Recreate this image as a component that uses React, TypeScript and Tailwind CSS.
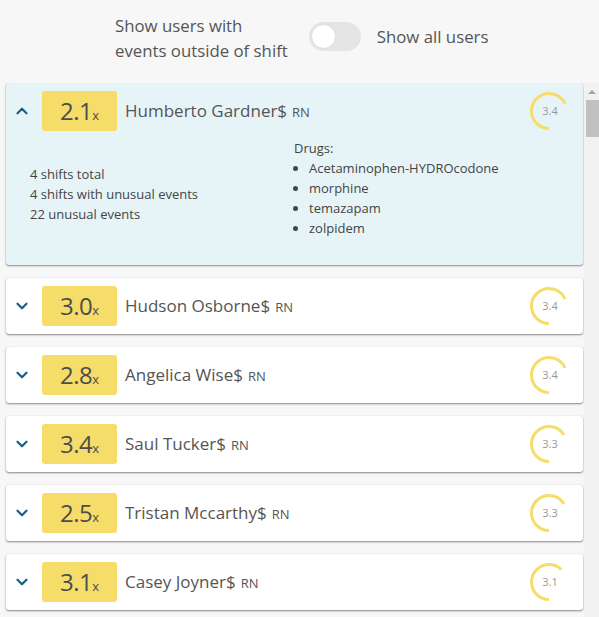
import { ChevronDown, ChevronUp } from "lucide-react";

type User = {
  id: number;
  score: string;
  name: string;
  rating: number;
  expanded?: boolean;
};

const USERS: User[] = [
  { id: 1, score: "2.1", name: "Humberto Gardner$", rating: 3.4, expanded: true },
  { id: 2, score: "3.0", name: "Hudson Osborne$", rating: 3.4 },
  { id: 3, score: "2.8", name: "Angelica Wise$", rating: 3.4 },
  { id: 4, score: "3.4", name: "Saul Tucker$", rating: 3.3 },
  { id: 5, score: "2.5", name: "Tristan Mccarthy$", rating: 3.3 },
  { id: 6, score: "3.1", name: "Casey Joyner$", rating: 3.1 },
];

const DRUGS = ["Acetaminophen-HYDROcodone", "morphine", "temazapam", "zolpidem"];

function RatingRing({ value }: { value: number }) {
  const r = 17.5;
  const c = 2 * Math.PI * r;
  const arc = (value / 5) * c;
  return (
    <div className="relative w-[40px] h-[40px] shrink-0">
      <svg width="40" height="40" viewBox="0 0 40 40">
        <circle
          cx="20"
          cy="20"
          r={r}
          fill="none"
          stroke="#f6dc69"
          strokeWidth="3"
          strokeDasharray={`${arc} ${c}`}
          transform="rotate(90 20 20)"
        />
      </svg>
      <span className="absolute inset-0 flex items-center justify-center pl-[2px] text-[11px] text-[#999]">
        {value.toFixed(1)}
      </span>
    </div>
  );
}

function UserCard({ user }: { user: User }) {
  return (
    <div
      className={`shrink-0 rounded-[3px] shadow-[0_1px_2px_rgba(0,0,0,0.45),0_0_1px_rgba(0,0,0,0.12)] ${
        user.expanded ? "bg-[#e6f4f8]" : "bg-white"
      }`}
    >
      {/* Header row */}
      <div className="h-[56px] flex items-center pl-[4px] pr-[14px]">
        <div className="w-[24px] flex justify-center text-[#1d5f86]">
          {user.expanded ? (
            <ChevronUp size={18} strokeWidth={3} />
          ) : (
            <ChevronDown size={18} strokeWidth={3} />
          )}
        </div>
        <div className="w-[75px] h-[40px] ml-[8px] rounded-[3px] bg-[#f6dc69] flex items-baseline justify-center pt-[6px] text-[#4d4d4d]">
          <span className="text-[24px] leading-[28px] tracking-[-0.5px]">{user.score}</span>
          <span className="text-[13px]">x</span>
        </div>
        <div className="ml-[8px] flex-1 flex items-baseline gap-[5px] text-[#555]">
          <span className="text-[17px]">{user.name}</span>
          <span className="text-[13px]">RN</span>
        </div>
        <RatingRing value={user.rating} />
      </div>

      {/* Expanded details */}
      {user.expanded && (
        <div className="flex pl-[24px] pb-[27px] text-[13px] leading-[20px] text-[#444]">
          <div className="w-[264px] pt-[25px]">
            <p>4 shifts total</p>
            <p>4 shifts with unusual events</p>
            <p>22 unusual events</p>
          </div>
          <div className="-mt-px">
            <p>Drugs:</p>
            <ul className="list-disc pl-[15px]">
              {DRUGS.map((d) => (
                <li key={d}>{d}</li>
              ))}
            </ul>
          </div>
        </div>
      )}
    </div>
  );
}

export default function App() {
  return (
    <div className="w-[599px] h-[617px] bg-[#f7f7f7] flex flex-col overflow-hidden font-['Open_Sans',sans-serif]">
      {/* Filter toggle */}
      <div className="h-[83px] shrink-0 flex items-center pl-[115px] pb-[10px] text-[#555] text-[16.8px]">
        <p className="leading-[25px] mt-[2px]">
          Show users with
          <br />
          events outside of shift
        </p>
        <div className="ml-[21px] w-[52px] h-[29px] rounded-full bg-[#e4e4e4] p-[2px] flex items-center">
          <div className="w-[25px] h-[25px] rounded-full bg-white border border-[#dedede]" />
        </div>
        <span className="ml-[16px]">Show all users</span>
      </div>

      {/* User list */}
      <div className="flex flex-1 min-h-0">
        <div className="flex-1 overflow-hidden pl-[6px] pr-px flex flex-col gap-[13px]">
          {USERS.map((u) => (
            <UserCard key={u.id} user={u} />
          ))}
        </div>
        {/* scrollbar */}
        <div className="w-[15px] shrink-0 bg-[#f1f1f1] flex flex-col items-end">
          <div className="w-full h-[17px] flex items-center justify-center">
            <div className="w-0 h-0 border-l-[4px] border-r-[4px] border-b-[4px] border-l-transparent border-r-transparent border-b-[#a3a3a3]" />
          </div>
          <div className="w-[13px] h-[37px] bg-[#c1c1c1]" />
        </div>
      </div>
    </div>
  );
}
